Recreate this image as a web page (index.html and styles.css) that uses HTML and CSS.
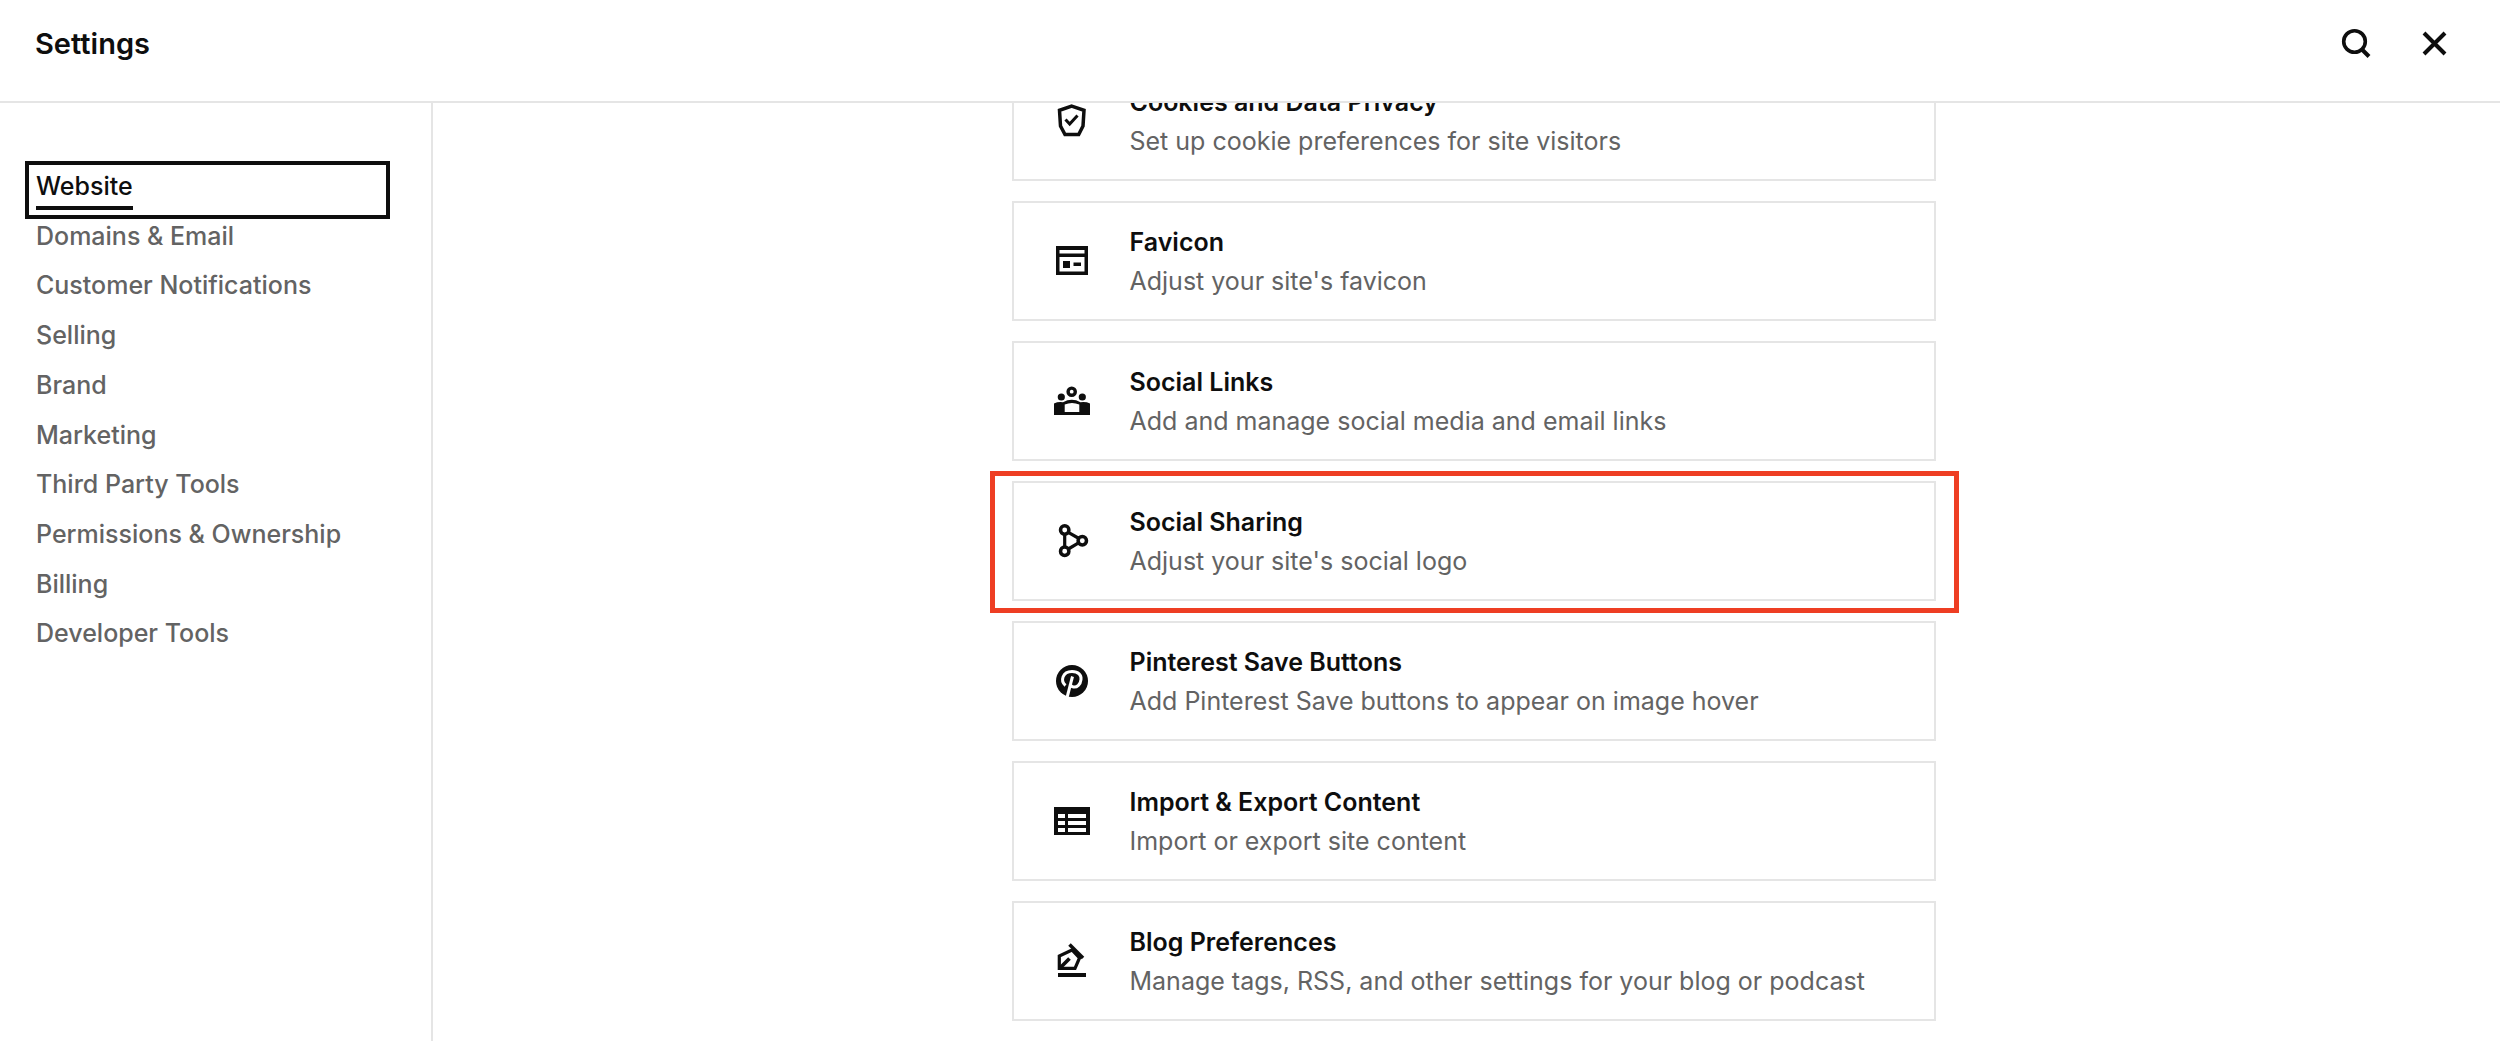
FILE: index.html
```html
<!DOCTYPE html>
<html lang="en">
<head>
<meta charset="utf-8">
<title>Settings</title>
<link rel="stylesheet" href="styles.css">
</head>
<body>
<header class="topbar">
  <h1 class="topbar-title">Settings</h1>
  <div class="topbar-actions">
    <button class="icon-button" type="button" aria-label="Search">
      <svg class="icon" viewBox="0 0 40 40"><g fill="none" stroke="currentColor" stroke-width="3.6"><circle cx="18.5" cy="18.5" r="10.8"/><path d="M25.5 26l7.5 7.5" stroke-width="4"/></g></svg>
    </button>
    <button class="icon-button" type="button" aria-label="Close">
      <svg class="icon" viewBox="0 0 40 40"><path d="M10 10l21 21M31 10l-21 21" fill="none" stroke="currentColor" stroke-width="4"/></svg>
    </button>
  </div>
</header>
<div class="layout">
  <nav class="sidebar" aria-label="Settings sections">
    <ul class="nav-list">
      <li><a class="nav-link nav-link-active" href="#website" aria-current="page"><span class="nav-label">Website</span></a></li>
      <li><a class="nav-link" href="#domains"><span class="nav-label">Domains &amp; Email</span></a></li>
      <li><a class="nav-link" href="#notifications"><span class="nav-label">Customer Notifications</span></a></li>
      <li><a class="nav-link" href="#selling"><span class="nav-label">Selling</span></a></li>
      <li><a class="nav-link" href="#brand"><span class="nav-label">Brand</span></a></li>
      <li><a class="nav-link" href="#marketing"><span class="nav-label">Marketing</span></a></li>
      <li><a class="nav-link" href="#third-party"><span class="nav-label">Third Party Tools</span></a></li>
      <li><a class="nav-link" href="#permissions"><span class="nav-label">Permissions &amp; Ownership</span></a></li>
      <li><a class="nav-link" href="#billing"><span class="nav-label">Billing</span></a></li>
      <li><a class="nav-link" href="#developer"><span class="nav-label">Developer Tools</span></a></li>
    </ul>
  </nav>
  <main class="content">
    <div class="card-list">
      <a class="card" href="#cookies">
        <svg class="icon" viewBox="0 0 40 40" aria-hidden="true"><g fill="none" stroke="currentColor"><path d="M19.7 5.2L32 9.3L31 25L26.7 33.5H13L8.5 25L7.5 9.3Z" stroke-width="3.5"/><path d="M13.5 18.5L17.7 23L25.5 14.5" stroke-width="3"/></g></svg>
        <span class="card-text"><span class="card-title">Cookies and Data Privacy</span><span class="card-note">Set up cookie preferences for site visitors</span></span>
      </a>
      <a class="card" href="#favicon">
        <svg class="icon" viewBox="0 0 40 40" aria-hidden="true"><path fill="currentColor" fill-rule="evenodd" d="M4 5H36V34H4ZM7.5 9V12.5H32.5V9ZM7.5 16V30.5H32.5V16ZM11 20H18V27H11ZM21.5 21.5H29V25H21.5Z"/></svg>
        <span class="card-text"><span class="card-title">Favicon</span><span class="card-note">Adjust your site's favicon</span></span>
      </a>
      <a class="card" href="#social-links">
        <svg class="icon" viewBox="0 0 40 40" aria-hidden="true"><circle cx="19.7" cy="10.7" r="3.6" fill="none" stroke="currentColor" stroke-width="3.4"/><circle cx="9.3" cy="16" r="3.6" fill="currentColor"/><circle cx="30.3" cy="16" r="3.6" fill="currentColor"/><path fill="currentColor" fill-rule="evenodd" d="M2 34V22.5Q6 20.5 11 21.2Q19.8 16.4 28.5 21.2Q34 20.5 38 22.5V34ZM12.7 31H27.3V23.5Q20 20.5 12.7 23.5Z"/></svg>
        <span class="card-text"><span class="card-title">Social Links</span><span class="card-note">Add and manage social media and email links</span></span>
      </a>
      <a class="card card-highlighted" href="#social-sharing">
        <svg class="icon" viewBox="0 0 40 40" aria-hidden="true"><g fill="none" stroke="currentColor" stroke-width="3.5"><circle cx="12.7" cy="9" r="4.2"/><circle cx="12.7" cy="30.3" r="4.2"/><circle cx="30.3" cy="19.7" r="4.2"/><path d="M12.7 13V26.5M16.3 11.3L27 17.5M16.3 28L27 21.7" stroke-width="3.2"/></g></svg>
        <span class="card-text"><span class="card-title">Social Sharing</span><span class="card-note">Adjust your site's social logo</span></span>
      </a>
      <a class="card" href="#pinterest">
        <svg class="icon" viewBox="0 0 40 40" aria-hidden="true"><circle cx="20" cy="20" r="16" fill="currentColor"/><g fill="none" stroke="#fff" stroke-width="3"><path d="M20.5 15.5L15.2 36"/><path d="M13.5 24.5C8 20 10.5 10.5 20 10.5C26.5 10.5 29.5 14.3 29 18.5C28.5 23.5 25 26.5 21.5 26C19.5 25.7 18.5 24.5 18.3 23"/></g></svg>
        <span class="card-text"><span class="card-title">Pinterest Save Buttons</span><span class="card-note">Add Pinterest Save buttons to appear on image hover</span></span>
      </a>
      <a class="card" href="#import-export">
        <svg class="icon" viewBox="0 0 40 40" aria-hidden="true"><path fill="currentColor" fill-rule="evenodd" d="M2 6H38V34H2ZM6 13V17H13V13ZM16 13V17H34V13ZM6 20V24H13V20ZM16 20V24H34V20ZM6 27V31H13V27ZM16 27V31H34V27Z"/></svg>
        <span class="card-text"><span class="card-title">Import &amp; Export Content</span><span class="card-note">Import or export site content</span></span>
      </a>
      <a class="card" href="#blog">
        <svg class="icon" viewBox="0 0 40 40" aria-hidden="true"><g fill="none" stroke="currentColor" stroke-width="3.2"><path d="M7.3 27.4V15L20 9L27.5 17L23 27.4Z"/><path d="M17.5 3.5L31 17" stroke-width="3.6"/><path d="M8 27L17.5 17.5" stroke-width="3.8"/></g><path fill="currentColor" d="M6 32H34V36H6Z"/></svg>
        <span class="card-text"><span class="card-title">Blog Preferences</span><span class="card-note">Manage tags, RSS, and other settings for your blog or podcast</span></span>
      </a>
    </div>
  </main>
</div>
</body>
</html>
```
FILE: styles.css
```css
* { box-sizing: border-box; }

body {
  margin: 0;
  height: 100vh;
  display: flex;
  flex-direction: column;
  overflow: hidden;
  background: #fff;
  color: #0e0e0e;
  font-family: Inter, "Liberation Sans", sans-serif;
  font-size: 25px;
}

.topbar {
  display: flex;
  flex-shrink: 0;
  justify-content: space-between;
  align-items: center;
  padding: 22px 46px 37px 35px;
  border-bottom: 2px solid #e5e5e5;
}

.topbar-title {
  margin: 0;
  padding-top: 2px;
  font-size: 29px;
  line-height: 40px;
  font-weight: 600;
}

.topbar-actions { display: flex; gap: 38px; }

.icon-button {
  padding: 0;
  border: 0;
  background: none;
  color: inherit;
}

.icon {
  display: block;
  flex: none;
  width: 40px;
  height: 40px;
}

.layout {
  display: flex;
  flex: 1;
  min-height: 0;
}

.sidebar {
  flex: none;
  width: 433px;
  padding: 62px 45px 0 29px;
  border-right: 2px solid #e5e5e5;
}

.nav-list {
  display: grid;
  grid-auto-rows: 1fr;
  height: 497px;
  margin: 0;
  padding: 0;
  list-style: none;
}

.nav-link {
  display: block;
  height: 100%;
  padding: 0 7px;
  color: #636363;
  font-weight: 500;
  line-height: 39px;
  text-decoration: none;
}

.nav-label {
  display: inline-block;
  padding-top: 2px;
}

.nav-link-active {
  color: #0e0e0e;
  outline: 4px solid #0e0e0e;
}

.nav-link-active .nav-label { border-bottom: 4px solid #0e0e0e; }

.content {
  flex: 1;
  min-width: 0;
  padding: 0 20px 0 34px;
  overflow: hidden;
}

/* The list sits part-way through its scroll, under the top bar. */
.card-list {
  display: flex;
  flex-direction: column;
  gap: 20px;
  max-width: 924px;
  margin: -42px auto 0;
}

.card {
  position: relative;
  display: flex;
  align-items: center;
  gap: 38px;
  padding: 18px 38px;
  border: 2px solid #e5e5e5;
  color: inherit;
  text-decoration: none;
}

.card-highlighted::after {
  content: "";
  position: absolute;
  inset: -12px -25px -14px -24px;
  border: 5px solid #ee3e23;
}

.card-text {
  display: flex;
  flex-direction: column;
  padding-top: 2px;
}

.card-title, .card-note { line-height: 39px; }

.card-title { font-weight: 600; }

.card-note { color: #636363; }
```
